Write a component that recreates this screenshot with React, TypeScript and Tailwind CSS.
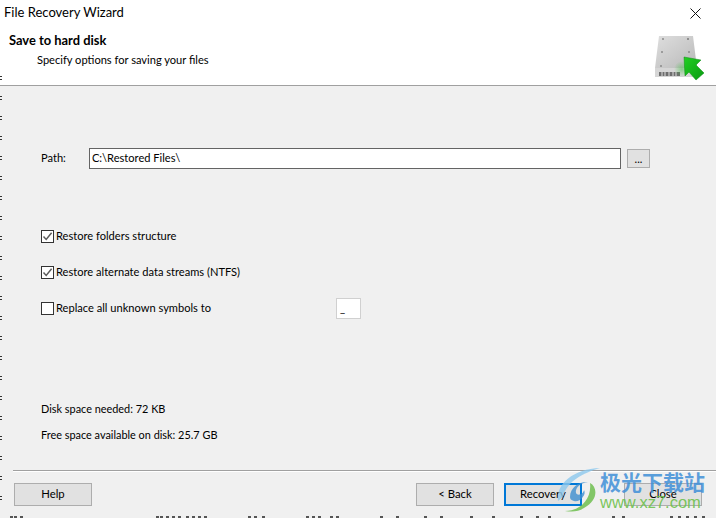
import React from "react";

const Btn = ({ label, focus, className = "" }: { label: string; focus?: boolean; className?: string }) => (
  <button
    className={`w-[78px] h-[23px] text-[11.3px] text-black flex items-center justify-center ${
      focus ? "border-2 border-[#0078d7] bg-[#e1e1e1]" : "border border-[#adadad] bg-[#e1e1e1]"
    } ${className}`}
  >
    {label}
  </button>
);

const Check = ({ label, checked }: { label: string; checked?: boolean }) => (
  <div className="flex items-center gap-[2px] h-[13px]">
    <div className="size-[13px] border border-[#333333] bg-white flex items-center justify-center">
      {checked && (
        <svg width="11" height="11" viewBox="0 0 11 11">
          <path d="M1.5 5.5 L4.2 8.4 L9.6 1.8" fill="none" stroke="#5a5a5a" strokeWidth="1.5" />
        </svg>
      )}
    </div>
    <span>{label}</span>
  </div>
);

const DiskIcon = () => (
  <svg width="50" height="50" viewBox="0 0 50 50" className="mt-[8px]">
    <defs>
      <linearGradient id="disk" x1="0" y1="0" x2="1" y2="1">
        <stop offset="0" stopColor="#dedede" />
        <stop offset="0.5" stopColor="#cccccc" />
        <stop offset="1" stopColor="#b8b8b8" />
      </linearGradient>
      <linearGradient id="arrow" x1="0" y1="0" x2="1" y2="1">
        <stop offset="0" stopColor="#22d022" />
        <stop offset="1" stopColor="#0a9a12" />
      </linearGradient>
      <radialGradient id="glow">
        <stop offset="0" stopColor="#30c030" stopOpacity="0.45" />
        <stop offset="1" stopColor="#30c030" stopOpacity="0" />
      </radialGradient>
    </defs>
    <path d="M5 2 H39 L43 34 H1 Z" fill="url(#disk)" />
    <rect x="1" y="34" width="42" height="9" fill="#d6d6d6" />
    <rect x="5" y="38" width="21" height="4" fill="#6e6e6e" />
    <path d="M8 38 V42 M11 38 V42 M15 38 V42 M19 38 V42 M22 38 V42" stroke="#dddddd" strokeWidth="1" />
    <circle cx="9" cy="5" r="1" fill="#8a8a8a" />
    <circle cx="34" cy="5" r="1" fill="#7a7a7a" />
    <circle cx="8" cy="18" r="1" fill="#8a8a8a" />
    <circle cx="35" cy="18" r="1" fill="#8a8a8a" />
    <circle cx="7" cy="32" r="1" fill="#8a8a8a" />
    <circle cx="28" cy="35" r="8" fill="url(#glow)" />
    <path d="M30 23 L47 26 L42 31 L50 39 L42 46 L35 38 L31 42 Z" fill="url(#arrow)" stroke="#0d8c14" strokeWidth="0.5" />
  </svg>
);

const Watermark = () => (
  <div className="absolute left-[556px] top-[467px] w-[160px] h-[46px] flex items-start pointer-events-none">
    <svg width="44" height="46" viewBox="0 0 44 46" className="shrink-0">
      <path d="M2 34 C0 16 18 2 44 1 C27 6 11 14 7 30 Z" fill="#8cc8ee" fillOpacity="0.8" />
      <path d="M14 30 C14 20 24 14 32 15 C24 16 19 21 20 26 C22 30 28 26 28 23 C31 28 23 36 18 34 C15 33 14 32 14 30 Z" fill="#3f8fd0" fillOpacity="0.8" />
      <path d="M9 44 C24 44 36 32 34 16 C42 20 42 34 28 41 C22 45 16 45 9 44 Z" fill="#67bc45" fillOpacity="0.8" />
    </svg>
    <div className="flex flex-col shrink-0 mt-[1px]">
      <span className="whitespace-nowrap text-[21px] leading-[26px] font-bold text-[#3f8fd8]/85 font-['Noto_Sans_CJK_SC',sans-serif]">
        极光下载站
      </span>
      <span className="whitespace-nowrap text-[16.5px] leading-[17px] text-[#6cc04a]/90 font-['Liberation_Sans',sans-serif]">
        www.xz7.com
      </span>
    </div>
  </div>
);

const edgeMarks = Array.from({ length: 22 }, (_, i) => 76 + i * 20);
const bottomMarks = [10, 14, 20, 156, 160, 166, 172, 178, 186, 192, 198, 204, 248, 254, 262, 306, 312, 318, 330, 336, 380, 396, 424, 440, 470, 492, 520, 536, 548, 612, 622, 670, 678, 686, 694, 702];

export default function App() {
  return (
    <div className="relative w-[716px] h-[518px] overflow-hidden bg-[#f0f0f0] flex flex-col text-[11.1px] text-black font-['Lato',sans-serif]">
      {/* title + banner */}
      <header className="h-[86px] shrink-0 bg-white border-b border-[#a0a0a0] flex flex-col">
        <div className="flex items-center justify-between h-[26px] pl-[4px] pr-[15px]">
          <span className="text-[13px]">File Recovery Wizard</span>
          <svg width="11" height="11" viewBox="0 0 11 11">
            <path d="M0.5 0.5 L10.5 10.5 M10.5 0.5 L0.5 10.5" stroke="#111" strokeWidth="1" />
          </svg>
        </div>
        <div className="flex justify-between pl-[9px] pr-[12px]">
          <div className="flex flex-col">
            <span className="text-[12.9px] font-bold leading-[15px] mt-[7px]">Save to hard disk</span>
            <span className="pl-[28px] mt-[4px] leading-[15px]">Specify options for saving your files</span>
          </div>
          <DiskIcon />
        </div>
      </header>

      <main className="flex-1 flex flex-col pl-[41px] pr-[66px]">
        <div className="flex items-center mt-[62px] h-[21px]">
          <span className="w-[48px]">Path:</span>
          <div className="w-[533px] h-[21px] bg-white border border-[#646464] pl-[2px] flex items-center">C:\Restored Files\</div>
          <div className="ml-[6px] w-[23px] h-[19px] border border-[#adadad] bg-[#e1e1e1] flex items-center justify-center leading-none">...</div>
        </div>

        <div className="flex flex-col gap-[23px] mt-[61px]">
          <Check label="Restore folders structure" checked />
          <Check label="Restore alternate data streams (NTFS)" checked />
          <div className="relative">
            <Check label="Replace all unknown symbols to" />
            <div className="absolute left-[295px] -top-[4px] w-[25px] h-[21px] bg-white border border-[#d0d0d0] pl-[3px] flex items-center">_</div>
          </div>
        </div>

        <div className="flex flex-col gap-[11px] mt-[86px] text-[10.9px]">
          <span className="leading-[15px]">Disk space needed: 72 KB</span>
          <span className="leading-[15px]">Free space available on disk: 25.7 GB</span>
        </div>
      </main>

      <footer className="shrink-0 h-[48px] px-[14px]">
        <div className="border-t border-[#a0a0a0] h-[2px] bg-white -mr-[14px] -ml-[1px]" />
        <div className="flex items-center mt-[11px]">
          <Btn label="Help" />
          <Btn label="< Back" className="ml-[324px]" />
          <Btn label="Recovery" focus className="ml-[10px]" />
          <Btn label="Close" className="ml-[42px]" />
        </div>
      </footer>

      {/* stray pixels from whatever sits behind the window */}
      {edgeMarks.map((y) => (
        <div key={y} className="absolute left-0 w-[2px] h-[4px] border-y border-[#333333]" style={{ top: y }} />
      ))}
      {bottomMarks.map((x) => (
        <div key={x} className="absolute bottom-0 w-[3px] h-[2px] bg-[#555555]" style={{ left: x }} />
      ))}

      <Watermark />
    </div>
  );
}
